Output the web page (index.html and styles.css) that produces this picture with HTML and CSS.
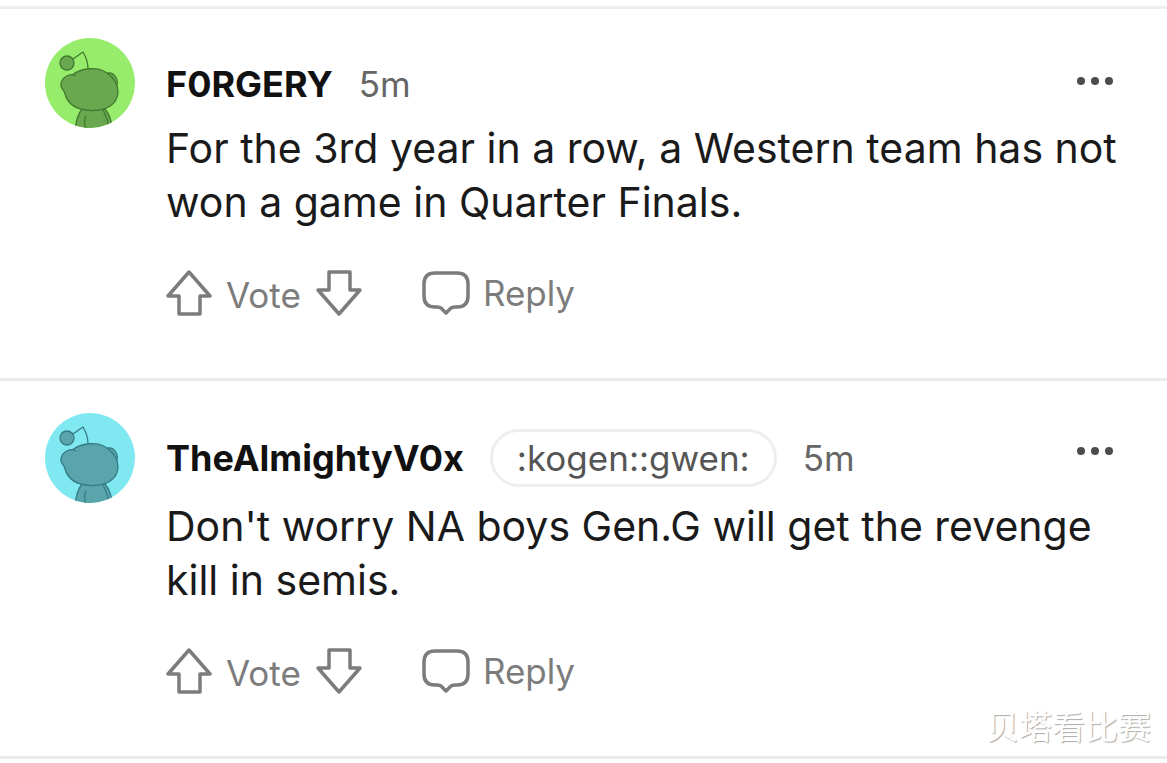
FILE: index.html
```html
<!DOCTYPE html>
<html lang="en">
<head>
<meta charset="utf-8">
<meta name="viewport" content="width=device-width, initial-scale=1">
<title>Comments</title>
<link rel="stylesheet" href="styles.css">
</head>
<body>
<svg class="sprite" aria-hidden="true">
  <symbol id="snoo" viewBox="0 0 90 90">
    <g fill="currentColor" class="snoo-line">
      <path d="M30 92C31 83 33 76 37 71H60C65 77 67 84 67 92Z"/>
      <path d="M41 92C39 86 39 82 41 78M58 72C61 78 64 84 64 92" fill="none"/>
      <path d="M63 35C69 34 75 42 71 49Z"/>
      <path d="M31 38C25 34 15 40 16 48C17 52 20 53 20 56C23 67 32 72 46 72.500C62 73 72 66 73 55C73 46 68 39 62 35C53 29 38 29 27 37"/>
      <path d="M43 30.500C43 25 41 19 38 14L28 21" fill="none"/>
      <circle cx="22" cy="25" r="7"/>
    </g>
  </symbol>
  <symbol id="up" viewBox="0 0 46 46"><path d="M23 2L44 26H34V44H13V26H2Z"/></symbol>
  <symbol id="down" viewBox="0 0 46 46"><path d="M23 44L44 20H34V2H13V20H2Z"/></symbol>
  <symbol id="bubble" viewBox="0 0 48 46"><path d="M13 3H35Q46 3 46 14V26Q46 37 35 37H33Q30 37 29 38L24 43L19 38Q18 37 15 37H13Q2 37 2 26V14Q2 3 13 3Z"/></symbol>
  <symbol id="dots" viewBox="0 0 38 10"><circle cx="5" cy="5" r="4"/><circle cx="19" cy="5" r="4"/><circle cx="33" cy="5" r="4"/></symbol>
</svg>
<main class="thread">
  <article class="comment comment-plain">
    <svg class="avatar avatar-green" role="img" aria-label="F0RGERY avatar"><use href="#snoo"/></svg>
    <div class="content">
      <header class="head">
        <h2 class="name">F0RGERY</h2>
        <time class="age">5m</time>
        <button class="more" type="button" aria-label="More options"><svg><use href="#dots"/></svg></button>
      </header>
      <p class="text">For the 3rd year in a row, a Western team has not won a game in Quarter Finals.</p>
      <div class="actions">
        <button class="action" type="button" aria-label="Upvote"><svg class="arrow"><use href="#up"/></svg></button>
        <span class="vote">Vote</span>
        <button class="action" type="button" aria-label="Downvote"><svg class="arrow"><use href="#down"/></svg></button>
        <button class="action reply" type="button"><svg class="bubble"><use href="#bubble"/></svg>Reply</button>
      </div>
    </div>
  </article>
  <article class="comment">
    <svg class="avatar avatar-blue" role="img" aria-label="TheAlmightyV0x avatar"><use href="#snoo"/></svg>
    <div class="content">
      <header class="head">
        <h2 class="name">TheAlmightyV0x</h2>
        <span class="flair">:kogen::gwen:</span>
        <time class="age">5m</time>
        <button class="more" type="button" aria-label="More options"><svg><use href="#dots"/></svg></button>
      </header>
      <p class="text">Don't worry NA boys Gen.G will get the revenge kill in semis.</p>
      <div class="actions">
        <button class="action" type="button" aria-label="Upvote"><svg class="arrow"><use href="#up"/></svg></button>
        <span class="vote">Vote</span>
        <button class="action" type="button" aria-label="Downvote"><svg class="arrow"><use href="#down"/></svg></button>
        <button class="action reply" type="button"><svg class="bubble"><use href="#bubble"/></svg>Reply</button>
      </div>
    </div>
  </article>
  <span class="watermark" lang="zh">贝塔看比赛</span>
</main>
</body>
</html>
```
FILE: styles.css
```css
* { box-sizing: border-box; }
body {
  margin: 0;
  background: #fff;
  color: #1a1a1b;
  font-family: Inter, "Noto Sans CJK SC", sans-serif;
}
.sprite { position: absolute; width: 0; height: 0; }
.thread { position: relative; margin-top: 6px; border-top: 3px solid #eee; }
.comment {
  display: flex;
  gap: 31px;
  padding: 32px 48px 60px 45px;
  border-bottom: 3px solid #ebebeb;
}
.comment-plain { padding-top: 29px; }
.avatar { flex: none; width: 90px; height: 90px; border-radius: 50%; }
.avatar-green { background: #98ec6c; color: #69a84f; stroke: #40792f; }
.avatar-blue { background: #80e8f0; color: #5aa4ab; stroke: #337b86; }
.snoo-line { stroke-width: 1.3; stroke-linejoin: round; }
.content { flex: 1; min-width: 0; padding-top: 16px; }
.comment-plain .content { padding-top: 21px; }
.head { display: flex; align-items: center; gap: 26px; min-height: 50px; margin-bottom: 12px; }
.name { margin: 0; font-size: 36px; line-height: 50px; font-weight: 700; color: #111; }
.age { font-size: 35px; line-height: 50px; color: #666; }
.flair {
  padding: 0 24px;
  border: 3px solid #eee;
  border-radius: 29px;
  font-size: 35px;
  line-height: 52px;
  color: #555;
}
.more { align-self: flex-start; margin-left: auto; padding: 17px 5px 0 0; border: 0; background: none; }
.more svg { display: block; width: 38px; height: 10px; fill: #4c4c4c; }
.text { margin: 0; font-size: 41px; line-height: 54px; }
.actions { display: flex; align-items: center; margin-top: 39px; color: #7c7c7c; font-size: 35px; line-height: 46px; }
.action {
  display: flex;
  align-items: center;
  gap: 13px;
  padding: 0;
  border: 0;
  background: none;
  color: inherit;
  font: inherit;
}
.actions svg { height: 46px; fill: none; stroke: #7c7c7c; stroke-width: 3.5; stroke-linejoin: round; }
.arrow { width: 46px; }
.bubble { width: 48px; }
.vote { padding: 4px 15px 0 14px; }
.reply { margin-left: 60px; }
.watermark {
  position: absolute;
  right: 16px;
  bottom: 10px;
  font-family: "Noto Sans CJK SC", sans-serif;
  font-size: 33px;
  line-height: 48px;
  color: #fff;
  text-shadow: 1px 1px 1px #aaa;
}
```
